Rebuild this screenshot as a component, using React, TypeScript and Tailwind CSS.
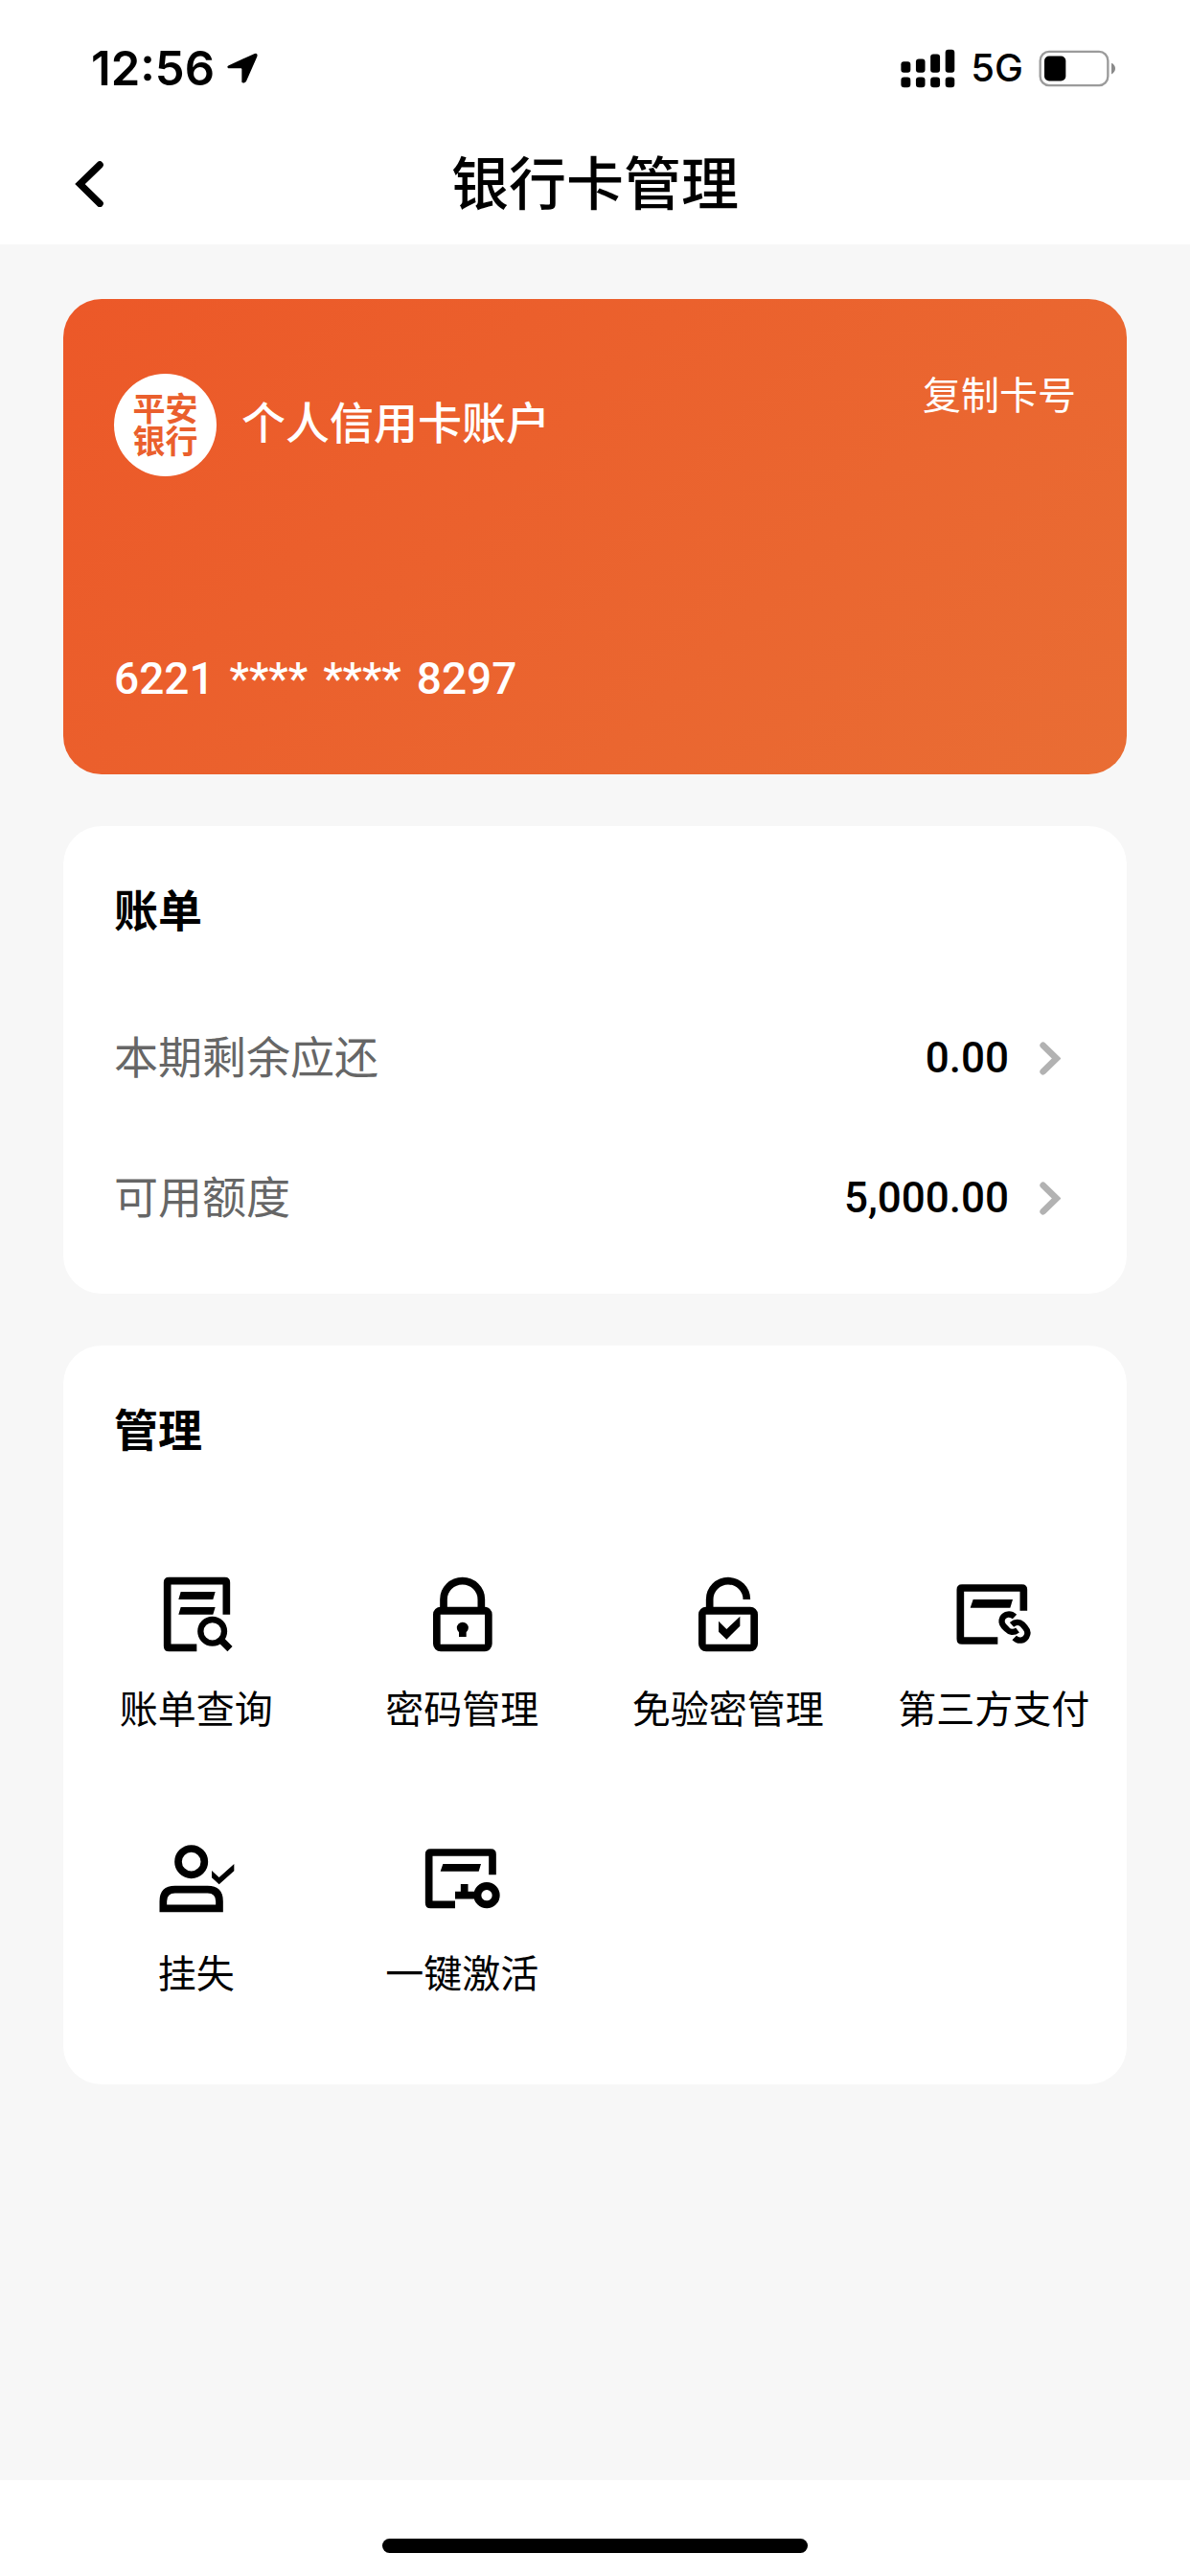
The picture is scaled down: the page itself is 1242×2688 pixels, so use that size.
import type { ReactNode } from "react";

function Icon({ viewBox, children }: { viewBox: string; children: ReactNode }) {
  return (
    <svg viewBox={viewBox} className="size-20" fill="none" stroke="currentColor" strokeWidth="23" aria-hidden="true">
      {children}
    </svg>
  );
}

const BillSearchIcon = () => (
  <Icon viewBox="194 135 240 240">
    <path d="M408 254V154Q408 149 403 149H228Q223 149 223 154V353Q223 358 228 358H315" />
    <path d="M265 183H373L366 207H258ZM265 231H373L366 254H258Z" fill="currentColor" stroke="none" />
    <circle cx="364" cy="307" r="37" strokeWidth="19" />
    <path d="M389 332L419 362" strokeWidth="22" />
  </Icon>
);

const LockIcon = () => (
  <Icon viewBox="186 135 240 240">
    <path d="M249 236V207A59 58 0 0 1 367 207V236" />
    <path fillRule="evenodd" d="M240 230H377A24 24 0 0 1 401 254V346A24 24 0 0 1 377 370H240A24 24 0 0 1 216 346V254A24 24 0 0 1 240 230ZM239 254V347H378V254Z" fill="currentColor" stroke="none" />
    <path d="M297 310A18 18 0 1 1 320 310V324H297Z" fill="currentColor" stroke="none" />
  </Icon>
);

const UnlockIcon = () => (
  <Icon viewBox="238 135 240 240">
    <path d="M300 236V207A58 58 0 0 1 416 207" />
    <path fillRule="evenodd" d="M289 230H427A24 24 0 0 1 451 254V346A24 24 0 0 1 427 370H289A24 24 0 0 1 265 346V254A24 24 0 0 1 289 230ZM288 254V347H428V254Z" fill="currentColor" stroke="none" />
    <path d="M328 275L353 300L395 260V290L353 332L328 308Z" fill="currentColor" stroke="none" />
  </Icon>
);

const PayLinkIcon = () => (
  <Icon viewBox="230 135 240 240">
    <path d="M444 242V176Q444 171 439 171H251Q246 171 246 176V331Q246 336 251 336H363" />
    <path d="M286 207H410L402 233H277Z" fill="currentColor" stroke="none" />
    <path d="M416 261C403 249 385 252 378 265C373 275 376 284 383 292L391 300C400 310 413 312 425 303" strokeWidth="19" />
    <path d="M407 286C418 276 432 277 440 285L449 295C456 303 459 313 453 323C446 336 428 340 415 327" strokeWidth="19" />
  </Icon>
);

const ReportLossIcon = () => (
  <Icon viewBox="194 123 240 240">
    <circle cx="298" cy="188" r="41" />
    <path d="M210 334V312Q210 275 247 275H349Q386 275 386 312V334Z" />
    <path d="M362 216L385 237L432 195V217L385 259L362 238Z" fill="currentColor" stroke="none" />
  </Icon>
);

const ActivateIcon = () => (
  <Icon viewBox="186 123 240 240">
    <path d="M402 229V164Q402 159 397 159H208Q203 159 203 164V317Q203 322 208 322H285" />
    <path d="M247 195H366L359 218H239Z" fill="currentColor" stroke="none" />
    <circle cx="384" cy="293" r="29" strokeWidth="24" />
    <path d="M285 293H350M314 258V293" />
  </Icon>
);

const actions = [
  { label: "账单查询", icon: <BillSearchIcon /> },
  { label: "密码管理", icon: <LockIcon /> },
  { label: "免验密管理", icon: <UnlockIcon /> },
  { label: "第三方支付", icon: <PayLinkIcon /> },
  { label: "挂失", icon: <ReportLossIcon /> },
  { label: "一键激活", icon: <ActivateIcon /> },
];

const bills = [
  { label: "本期剩余应还", amount: "0.00" },
  { label: "可用额度", amount: "5,000.00" },
];

const cardNumber = ["6221", "****", "****", "8297"];

function StatusBar() {
  return (
    <div className="flex h-[142px] items-center justify-between pr-[78px] pl-[95px] font-['Inter',sans-serif]">
      <div className="flex items-center gap-3">
        <span className="text-[49px] leading-none font-semibold">12:56</span>
        <svg viewBox="528 68 102 104" className="size-[34px]" aria-hidden="true">
          <path d="M534 112L618 74Q629 71 626 83L591 163Q587 169 579 167L577 165V124Q577 121 574 121H534Q528 116 534 112Z" fill="currentColor" />
        </svg>
      </div>
      <div className="flex items-center gap-4">
        <svg viewBox="122 58 172 124" className="h-[41px] w-[57px]" fill="currentColor" aria-hidden="true">
          <rect x="123" y="98" width="30" height="35" rx="9" />
          <rect x="170" y="90" width="29" height="43" rx="9" />
          <rect x="216" y="75" width="30" height="58" rx="9" />
          <rect x="263" y="60" width="29" height="73" rx="9" />
          <rect x="123" y="147" width="30" height="33" rx="10" />
          <rect x="170" y="147" width="29" height="33" rx="10" />
          <rect x="216" y="147" width="30" height="33" rx="10" />
          <rect x="263" y="147" width="29" height="33" rx="10" />
        </svg>
        <span className="text-[40px] leading-none font-medium">5G</span>
        <svg viewBox="549 62 240 116" className="h-[39px] w-[80px]" aria-hidden="true">
          <rect x="554" y="67" width="212" height="106" rx="28" fill="none" stroke="#9b9b9b" strokeWidth="7" />
          <rect x="567" y="81" width="67" height="78" rx="15" fill="currentColor" />
          <path d="M777 103Q789 109 789 120T777 138Z" fill="#8a8a8a" />
        </svg>
      </div>
    </div>
  );
}

export default function App() {
  return (
    <div className="flex min-h-screen flex-col bg-white font-['Roboto','Noto_Sans_CJK_SC',sans-serif] text-black">
      <StatusBar />
      <header className="grid h-[113px] grid-cols-[1fr_auto_1fr] items-start">
        <button type="button" aria-label="返回" className="ml-[78px] flex h-[100px] w-12 items-center">
          <svg viewBox="54 412 92 144" className="h-12 w-[31px]" fill="none" stroke="currentColor" strokeWidth="22" strokeLinecap="round" aria-hidden="true">
            <path d="M132 424L70 484L132 545" />
          </svg>
        </button>
        <h1 className="text-[60px] leading-[104px] font-medium">银行卡管理</h1>
      </header>

      <main className="flex flex-1 flex-col gap-[54px] bg-[#f7f7f7] px-[66px] pt-[57px] pb-20">
        <section className="flex h-[496px] flex-col justify-between rounded-[40px] bg-linear-135 from-[#ec5828] to-[#e96d34] px-[53px] pt-[78px] pb-[72px] text-white">
          <div className="flex items-start justify-between">
            <div className="flex gap-[26px]">
              <div className="flex size-[107px] flex-col items-center justify-center rounded-full bg-white text-[34px] leading-[34px] font-bold text-[#ea5f2d]">
                <span>平安</span>
                <span>银行</span>
              </div>
              <h2 className="text-[46px] leading-[104px] font-medium">个人信用卡账户</h2>
            </div>
            <button type="button" className="-mt-1 text-[40px] leading-[56px]">
              复制卡号
            </button>
          </div>
          <p className="flex gap-4 text-[46px] leading-[56px] font-medium">
            {cardNumber.map((group, index) => (
              <span key={index}>{group}</span>
            ))}
          </p>
        </section>

        <section className="rounded-[40px] bg-white px-[53px] pt-[59px] pb-[27px]">
          <h2 className="text-[46px] leading-[60px] font-bold">账单</h2>
          <ul className="mt-[50px]">
            {bills.map(({ label, amount }) => (
              <li key={label}>
                <button type="button" className="flex h-[146px] w-full items-center justify-between pr-4">
                  <span className="text-[46px] leading-[60px] text-[#666]">{label}</span>
                  <span className="flex items-center gap-8">
                    <span className="text-[44px] leading-[60px] font-medium">{amount}</span>
                    <svg viewBox="731 112 66 104" className="h-[35px] w-[22px]" fill="none" stroke="#b2b2b2" strokeWidth="20" strokeLinecap="round" aria-hidden="true">
                      <path d="M742 123L784 164L742 205" />
                    </svg>
                  </span>
                </button>
              </li>
            ))}
          </ul>
        </section>

        <section className="rounded-[40px] bg-white pt-[59px] pb-[38px]">
          <h2 className="px-[53px] text-[46px] leading-[60px] font-bold">管理</h2>
          <div className="mt-[62px] grid grid-cols-4">
            {actions.map(({ label, icon }) => (
              <button key={label} type="button" className="flex h-[276px] flex-col items-center gap-8 pt-[60px]">
                {icon}
                <span className="text-[40px] leading-[56px] whitespace-nowrap">{label}</span>
              </button>
            ))}
          </div>
        </section>
      </main>

      <footer className="flex h-[100px] items-end justify-center pb-6">
        <div className="h-[15px] w-[444px] rounded-full bg-black" />
      </footer>
    </div>
  );
}
